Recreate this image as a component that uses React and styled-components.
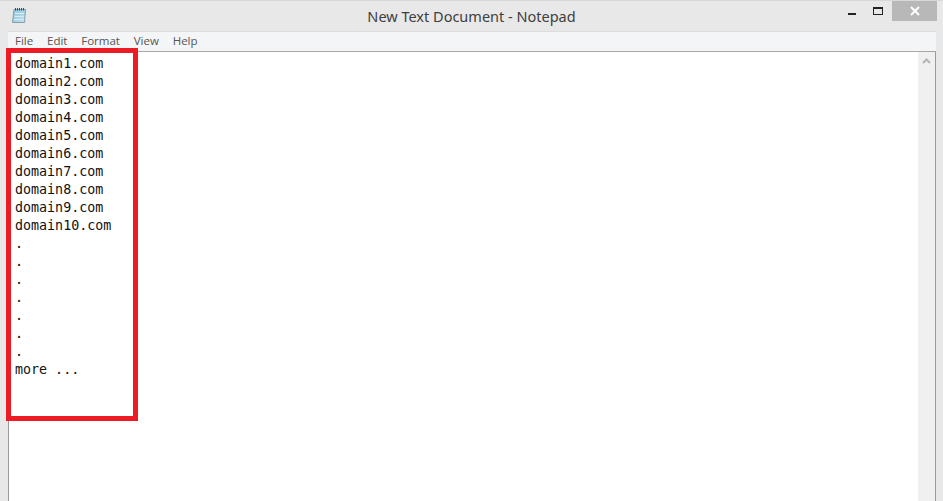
import React from "react";
import styled, { createGlobalStyle } from "styled-components";

const Global = createGlobalStyle`
  html, body { margin: 0; padding: 0; background: #e8e8e8; }
  #root { width: 943px; height: 501px; overflow: hidden; }
`;

const Win = styled.div`
  position: relative;
  width: 943px;
  height: 501px;
  box-sizing: border-box;
  background: #e8e8e8;
  border-top: 1px solid #d8d8d8;
  display: flex;
  flex-direction: column;
  font-family: "Open Sans", "Noto Sans", sans-serif;
`;

const TitleBar = styled.div`
  height: 30px;
  display: flex;
  align-items: center;
  position: relative;
  flex: none;
`;

const AppIcon = styled.svg`
  width: 16px;
  height: 17px;
  margin-left: 11px;
  margin-top: -1px;
`;

const Title = styled.div`
  position: absolute;
  left: 0;
  right: 0;
  top: 5px;
  text-align: center;
  font-family: "Noto Sans", "Open Sans", sans-serif;
  font-size: 14.5px;
  line-height: 20px;
  color: #3e3e3e;
`;

const Controls = styled.div`
  margin-left: auto;
  margin-right: 6px;
  display: flex;
  align-items: flex-start;
  align-self: flex-start;
`;

const Ctl = styled.div`
  width: ${(p) => p.$w}px;
  height: 20px;
  display: flex;
  align-items: center;
  justify-content: center;
  background: ${(p) => p.$bg || "transparent"};
`;

const Body = styled.div`
  flex: 1;
  margin: 0 7px 0 8px;
  display: flex;
  flex-direction: column;
  min-height: 0;
`;

const MenuBar = styled.div`
  height: 20px;
  box-sizing: border-box;
  background: #f4f5f7;
  border-top: 1px solid #dcdcdc;
  display: flex;
  align-items: center;
  flex: none;
  padding-left: 7px;
  padding-bottom: 1px;
  gap: 13.8px;
`;

const MenuItem = styled.span`
  font-size: 11.5px;
  color: #555;
  line-height: 18px;
`;

const Editor = styled.div`
  flex: 1;
  display: flex;
  background: #fff;
  border-top: 1px solid #a8a8a8;
  border-left: 1px solid #9a9a9a;
  border-right: 1px solid #9a9a9a;
  min-height: 0;
`;

const Text = styled.pre`
  flex: 1;
  margin: 0;
  padding: 3px 0 0 6px;
  font-family: "DejaVu Sans Mono", monospace;
  font-size: 13.33px;
  line-height: 18px;
  color: #111;
`;

const Scrollbar = styled.div`
  width: 17px;
  background: #f0f0f0;
  flex: none;
  display: flex;
  justify-content: center;
  padding-top: 6px;
  box-sizing: border-box;
`;

const Highlight = styled.div`
  position: absolute;
  left: 6px;
  top: 47px;
  width: 132px;
  height: 373px;
  box-sizing: border-box;
  border: 5px solid #ed1c24;
`;

const lines = [
  "domain1.com","domain2.com","domain3.com","domain4.com","domain5.com",
  "domain6.com","domain7.com","domain8.com","domain9.com","domain10.com",
  ".",".",".",".",".",".",".","more ...",
];

export default function App() {
  return (
    <Win>
      <Global />
      <TitleBar>
        <AppIcon viewBox="0 0 16 17">
          <defs>
            <linearGradient id="pad" x1="0" y1="0" x2="1" y2="1">
              <stop offset="0" stopColor="#8cc6dc" />
              <stop offset="1" stopColor="#c6e3ee" />
            </linearGradient>
          </defs>
          <path d="M3 2.5 H14.5 L13.5 15.5 H1.5 Z" fill="url(#pad)" stroke="#6f8f9f" strokeWidth="0.8" />
          <path d="M4 6.5H13M3.6 9.5H12.8M3.3 12.5H12.6" stroke="#dff1f7" strokeWidth="0.8" />
          <path d="M4.5 1V3.5M6.5 1V3.5M8.5 1V3.5M10.5 1V3.5M12.5 1V3.5" stroke="#4a4a4a" strokeWidth="1" />
        </AppIcon>
        <Title>New Text Document - Notepad</Title>
        <Controls>
          <Ctl $w={27}>
            <svg width="10" height="10" viewBox="0 0 10 10"><rect x="1" y="7" width="8" height="2" fill="#222" /></svg>
          </Ctl>
          <Ctl $w={27}>
            <svg width="11" height="9" viewBox="0 0 11 9"><rect x="0.5" y="0.5" width="9" height="7" fill="none" stroke="#222" /><rect x="0" y="0" width="10" height="2" fill="#222" /></svg>
          </Ctl>
          <Ctl $w={45} $bg="#b8b8b8">
            <svg width="10" height="10" viewBox="0 0 10 10"><path d="M1 1 L9 9 M9 1 L1 9" stroke="#fff" strokeWidth="2" /></svg>
          </Ctl>
        </Controls>
      </TitleBar>
      <Body>
        <MenuBar>
          {["File", "Edit", "Format", "View", "Help"].map((m) => (
            <MenuItem key={m}>{m}</MenuItem>
          ))}
        </MenuBar>
        <Editor>
          <Text>{lines.join("\n")}</Text>
          <Scrollbar>
            <svg width="9" height="6" viewBox="0 0 9 6"><path d="M1 5 L4.5 1.5 L8 5" fill="none" stroke="#b4b4b4" strokeWidth="2" /></svg>
          </Scrollbar>
        </Editor>
      </Body>
      <Highlight />
    </Win>
  );
}
